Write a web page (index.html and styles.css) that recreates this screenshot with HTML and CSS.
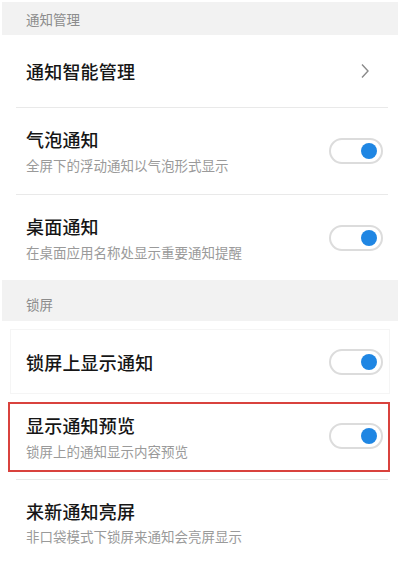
FILE: index.html
```html
<!DOCTYPE html>
<html lang="zh-CN">
<head>
  <meta charset="UTF-8">
  <meta name="viewport" content="width=device-width, initial-scale=1.0">
  <title>通知管理</title>
  <link rel="stylesheet" href="styles.css">
</head>
<body>
  <div class="page">
    <!-- 通知管理 -->
    <div class="group-title first">通知管理</div>

    <div class="row nav-row">
      <div class="title">通知智能管理</div>
      <svg class="chevron" width="10" height="16" viewBox="0 0 10 16">
        <path d="M2 1.5 L8 8 L2 14.5" fill="none" stroke="#8a8a8a" stroke-width="1.4"/>
      </svg>
    </div>
    <div class="divider"></div>

    <div class="row r-bubble">
      <div class="texts">
        <div class="title">气泡通知</div>
        <div class="sub">全屏下的浮动通知以气泡形式显示</div>
      </div>
      <div class="switch"><span class="knob"></span></div>
    </div>
    <div class="divider"></div>

    <div class="row r-desk">
      <div class="texts">
        <div class="title">桌面通知</div>
        <div class="sub">在桌面应用名称处显示重要通知提醒</div>
      </div>
      <div class="switch"><span class="knob"></span></div>
    </div>

    <!-- 锁屏 -->
    <div class="group-title second">锁屏</div>

    <div class="row r-lock">
      <div class="title">锁屏上显示通知</div>
      <div class="switch"><span class="knob"></span></div>
    </div>

    <div class="row r-preview">
      <div class="texts">
        <div class="title">显示通知预览</div>
        <div class="sub">锁屏上的通知显示内容预览</div>
      </div>
      <div class="switch"><span class="knob"></span></div>
    </div>
    <div class="divider"></div>

    <div class="row r-wake">
      <div class="texts">
        <div class="title">来新通知亮屏</div>
        <div class="sub">非口袋模式下锁屏来通知会亮屏显示</div>
      </div>
    </div>
  </div>
</body>
</html>
```

FILE: styles.css
```css
body {
  margin: 0;
  background: #fff;
  font-family: "Noto Sans CJK SC", "Noto Sans", sans-serif;
}

.page {
  padding: 2px 2px 0;
  height: 560px;
  overflow: hidden;
}

/* Group headers */
.group-title {
  background: #f2f2f2;
  color: #8c8c8c;
  font-size: 13.5px;
  padding-left: 24px;
  display: flex;
  align-items: center;
}

.group-title.first {
  height: 33px;
}

.group-title.second {
  height: 41px;
  padding-top: 6px;
  box-sizing: border-box;
}

/* Rows */
.row {
  display: flex;
  align-items: center;
  justify-content: space-between;
  padding: 0 15px 0 24px;
}

.title {
  font-size: 18px;
  font-weight: 500;
  color: #161616;
  line-height: 26px;
  letter-spacing: 0.2px;
}

.sub {
  font-size: 13.5px;
  color: #9a9a9a;
  line-height: 26px;
}

.texts {
  margin-top: 2px;
}

.nav-row {
  height: 72px;
  padding-right: 28px;
}

.chevron {
  display: block;
}

.divider {
  height: 1px;
  background: #e9e9e9;
  margin: 0 10px 0 14px;
}

.r-bubble {
  height: 86px;
}

.r-desk {
  height: 85px;
}

.r-lock {
  height: 63px;
  margin: 8px 8px 8px 8px;
  border: 1px solid #f5f5f5;
  padding: 0 6px 0 15px;
}

.r-preview {
  height: 66px;
  margin: 0 8px 7px 6px;
  border: 2px solid #d9423d;
  padding: 0 5px 0 16px;
}

.r-preview .switch {
  margin-top: -3px;
}

.r-wake {
  padding-top: 18px;
}

.r-wake .texts {
  margin-top: 0;
}

.r-wake .sub {
  line-height: 24px;
}

/* Toggle switch */
.switch {
  width: 54px;
  height: 26px;
  box-sizing: border-box;
  border: 2px solid #dcdcdc;
  border-radius: 13px;
  background: #fff;
  display: flex;
  align-items: center;
  justify-content: flex-end;
  padding-right: 4px;
}

.knob {
  width: 16px;
  height: 16px;
  border-radius: 50%;
  background: #1f86e3;
}
```
